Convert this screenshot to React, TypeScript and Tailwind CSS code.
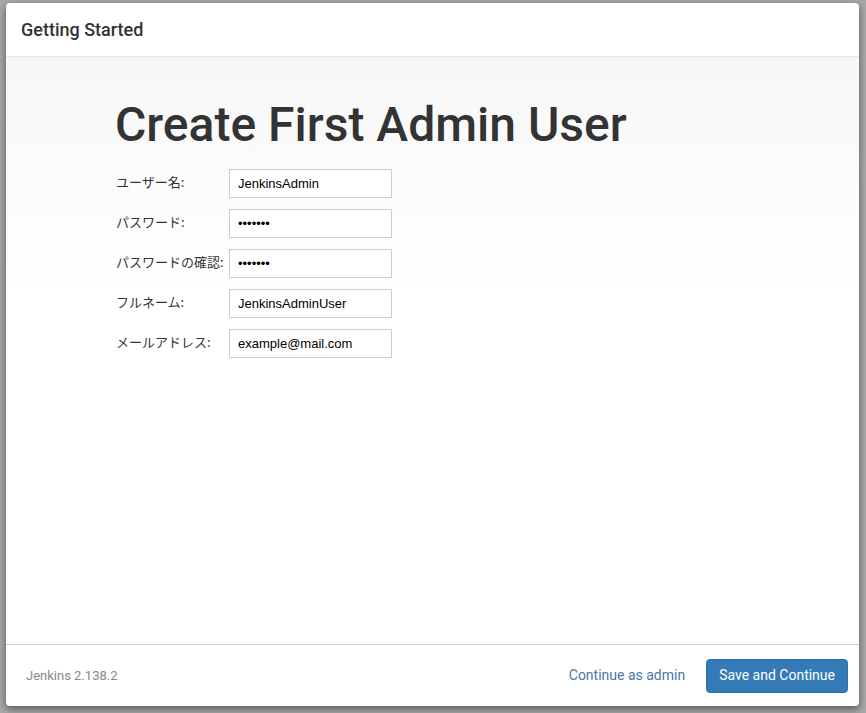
const fields = [
  { label: "ユーザー名:", value: "JenkinsAdmin", type: "text" },
  { label: "パスワード:", value: "jenkins", type: "password" },
  { label: "パスワードの確認:", value: "jenkins", type: "password" },
  { label: "フルネーム:", value: "JenkinsAdminUser", type: "text" },
  { label: "メールアドレス:", value: "example@mail.com", type: "text" },
]

export default function App() {
  return (
    <div className="w-full h-[713px] bg-[#a9a9a9] pt-[3px] pl-[6px] pr-[7px] pb-[7px]">
      <div className="h-full flex flex-col bg-white rounded-[4px] shadow-[0_3px_9px_rgba(0,0,0,0.5)] overflow-hidden font-['Roboto',sans-serif] text-[#333]">
        <div className="h-[54px] flex items-center px-[15px] border-b border-[#e5e5e5]">
          <h4 className="text-[18px] font-medium leading-none">Getting Started</h4>
        </div>
        <div className="flex-1 bg-gradient-to-b from-[#f7f7f7] to-white to-[40%] px-[109px]">
          <h1 className="text-[48px] font-medium leading-none mt-[44px] mb-[20px]">
            Create First Admin User
          </h1>
          <div className="flex flex-col gap-[11px]">
            {fields.map((f) => (
              <div key={f.label} className="flex items-start">
                <label className="w-[114px] pl-px pt-[3px] text-[13px] text-[#333] font-['Noto_Sans_CJK_JP',sans-serif] whitespace-nowrap">
                  {f.label}
                </label>
                <input
                  type={f.type}
                  defaultValue={f.value}
                  className="w-[163px] h-[29px] border border-[#ccc] bg-white px-[8px] text-[13px] text-black font-['Liberation_Sans',Arial,sans-serif] outline-none"
                />
              </div>
            ))}
          </div>
        </div>
        <div className="h-[62px] border-t border-[#ccc] flex items-center pl-[20px] pr-[11px]">
          <span className="text-[13px] text-[#888]">Jenkins 2.138.2</span>
          <div className="ml-auto flex items-center gap-[21px]">
            <button className="text-[14px] text-[#4a77a8]">Continue as admin</button>
            <button className="h-[34px] px-[12px] bg-[#337ab7] border border-[#2e6da4] text-white text-[14px] rounded-[4px]">
              Save and Continue
            </button>
          </div>
        </div>
      </div>
    </div>
  )
}
